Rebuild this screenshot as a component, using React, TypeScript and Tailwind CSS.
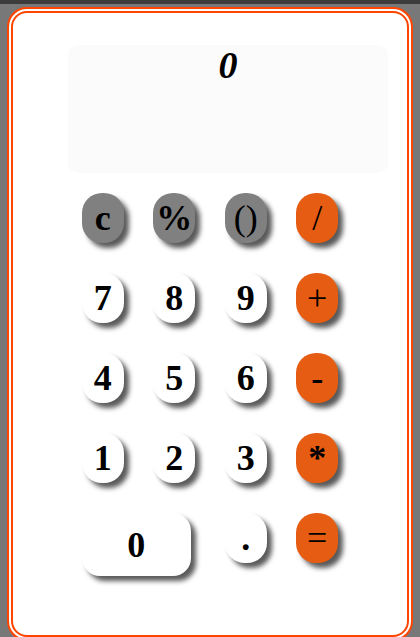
import React from 'react';

type Key = {
  label: string;
  kind: 'gray' | 'white' | 'orange';
  thin?: boolean;
  wide?: boolean;
};

const keys: Key[] = [
  { label: 'c', kind: 'gray' },
  { label: '%', kind: 'gray' },
  { label: '()', kind: 'gray', thin: true },
  { label: '/', kind: 'orange', thin: true },
  { label: '7', kind: 'white' },
  { label: '8', kind: 'white' },
  { label: '9', kind: 'white' },
  { label: '+', kind: 'orange', thin: true },
  { label: '4', kind: 'white' },
  { label: '5', kind: 'white' },
  { label: '6', kind: 'white' },
  { label: '-', kind: 'orange' },
  { label: '1', kind: 'white' },
  { label: '2', kind: 'white' },
  { label: '3', kind: 'white' },
  { label: '*', kind: 'orange' },
  { label: '0', kind: 'white', wide: true },
  { label: '.', kind: 'white' },
  { label: '=', kind: 'orange', thin: true },
];

const bg = {
  gray: 'bg-[#808080]',
  white: 'bg-white',
  orange: 'bg-[#e65c12]',
};

const CalcKey: React.FC<{ k: Key }> = ({ k }) => {
  return (
    <button
      className={`${bg[k.kind]} ${
        k.wide ? 'col-span-2 w-[109px] h-[63px] rounded-[18px]' : 'w-[42px] h-[50px] rounded-[20px]'
      } ${k.thin ? 'font-normal' : 'font-bold'} flex items-center justify-center text-[36px] leading-none text-black shadow-[5px_5px_5px_#5a5a5a]`}
    >
      {k.label}
    </button>
  );
};

export default function App() {
  return (
    <div className="min-h-screen w-full bg-[#787878] flex flex-col" style={{ fontFamily: '"Liberation Serif", "Times New Roman", serif' }}>
      <div className="h-[4px] bg-[#3c3c3c]" />
      <div className="px-[7px] pt-[3px]">
        <div className="h-[634px] bg-white border-[6px] border-double border-[#ff4500] rounded-[20px] flex flex-col items-center pt-[32px]">
          <div className="self-start ml-[55px] w-[320px] h-[128px] bg-[#fbfbfb] rounded-[10px] flex justify-center">
            <span className="text-[38px] italic font-bold leading-[40px] text-black">0</span>
          </div>
          <div className="mt-[20px] grid grid-cols-[42px_42px_42px_42px] gap-x-[29.5px] gap-y-[30px] items-start">
            {keys.map((k) => (
              <CalcKey key={k.label} k={k} />
            ))}
          </div>
        </div>
      </div>
    </div>
  );
}
